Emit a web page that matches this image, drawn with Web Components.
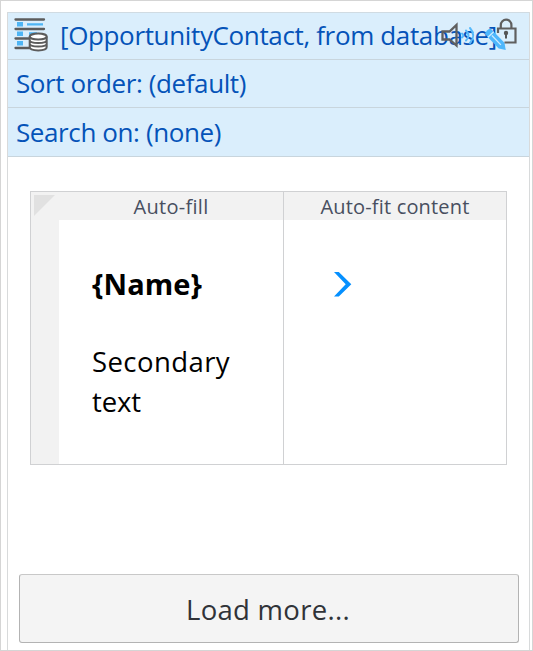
<!DOCTYPE html>
<html lang="en"><head><meta charset="utf-8"><title>List widget</title>
<style>
html,body{margin:0;height:100%;background:#fff}
body{font-family:"Open Sans","Noto Sans",sans-serif;overflow:hidden}
</style></head><body>
<page-frame>
  <source-header>
    <source-row icons><fit-text width="435">[OpportunityContact, from database]</fit-text></source-row>
    <source-row><fit-text width="228">Sort order: (default)</fit-text></source-row>
    <source-row><fit-text width="203">Search on: (none)</fit-text></source-row>
  </source-header>
  <layout-grid>
    <fit-text slot="h1" width="73">Auto-fill</fit-text>
    <fit-text slot="h2" width="147">Auto-fit content</fit-text>
    <fit-text slot="title" width="108">{Name}</fit-text>
    <fit-text slot="sub" width="136">Secondary</fit-text>
    <fit-text slot="sub" width="47">text</fit-text>
    <chevron-icon slot="action"></chevron-icon>
  </layout-grid>
  <load-button><fit-text width="162">Load more...</fit-text></load-button>
</page-frame>
<script>
const define=(name,html,after)=>customElements.define(name,class extends HTMLElement{
  connectedCallback(){
    if(this.shadowRoot)return;
    this.attachShadow({mode:'open'}).innerHTML=html;
    if(after)after(this);
  }
});
define('page-frame',`<style>
:host{display:block;box-sizing:border-box;width:533px;height:651px;border:1px solid #d5d5d5;padding:11px 2px 0 6px}
.panel{box-sizing:border-box;height:638px;border:1px solid #d8dadb;border-width:0 1px;width:523px;display:flex;flex-direction:column}
</style><div class="panel"><slot></slot></div>`);
define('source-header',`<style>:host{display:block;border-top:1px solid #d0dbe2;background:#daeefc}</style><slot></slot>`);
define('source-row',`<style>
:host{display:flex;position:relative;box-sizing:border-box;height:48px;padding-left:8px;border-bottom:1px solid #c8d5dd;color:#0553b8;font-size:26px;line-height:47px;background:#daeefc}
:host([icons]){height:47px;line-height:45px;padding-left:5px}
:host(:last-child){height:49px;line-height:48px}
.tools{position:absolute;right:9px;top:3px}
list-icon{margin-right:11px}
:host(:not([icons])) list-icon,:host(:not([icons])) .tools{display:none}
</style><list-icon></list-icon><slot></slot><tool-icons class="tools"></tool-icons>`);
define('list-icon',`<style>:host{display:block;flex:none;width:36px;height:46px}svg{display:block}</style>
<svg width="36" height="46" viewBox="13 13 36 46">
<g fill="#4eb5f5"><path d="M17 22h6v4.500h-6zM17 31.500h6v4.500h-6zM17 41h6v4.500h-6z"/><path d="M27 23.200h16v2.200H27zM29 32.300h8v2.500h-8z"/></g>
<g stroke="#5c5c5c" stroke-width="2.300" stroke-linecap="round"><path d="M15.500 19.500h28.500M15.500 29h28.500M15.500 38.500h14M15.500 48h14"/></g>
<path d="M29.700 36.300v10.500c0 5 17 5 17 0V36.300z" fill="#fff"/>
<ellipse cx="38.200" cy="36.300" rx="8.500" ry="3" fill="#fff"/>
<g fill="none" stroke="#5c5c5c" stroke-width="2"><ellipse cx="38.200" cy="36.600" rx="8.500" ry="3"/><path d="M29.700 36.600v10.500c0 4.500 17 4.500 17 0V36.600M29.700 40c0 4 17 4 17 0M29.700 43.600c0 4 17 4 17 0"/></g></svg>`);
define('tool-icons',`<style>:host{display:block;width:80px;height:36px}svg{display:block}</style>
<svg width="80" height="36" viewBox="440 16 80 36">
<g fill="none" stroke="#5f5f5f" stroke-width="2.300"><path d="M442.500 31.500h7l7-6.500v20.500l-7-6h-7z"/></g>
<g fill="none" stroke="#55b9fb" stroke-width="2" stroke-linecap="round"><path d="M462 33.500q2.500 2 0 4M466 30.500q5 5 0 10M470 28q6.500 7.500 0 15"/></g>
<g transform="translate(487 30.500) rotate(46)"><path d="M1-4h20l6 4-6 4H1q-2-4 0-8z" fill="#4eb7fc"/><path d="M5.500-4v8M7 0h13" stroke="#cdebff" stroke-width="1.300"/></g>
<path d="M498 33v-4.500h17.500v14H504.500" fill="none" stroke="#5f5f5f" stroke-width="2.200"/>
<path d="M500.800 28v-3a5.300 5.300 0 0 1 10.600 0v3" fill="none" stroke="#5f5f5f" stroke-width="2.200"/>
<circle cx="506" cy="33" r="2.200" fill="#555"/><path d="M506 33v5.500" stroke="#555" stroke-width="2"/></svg>`);
define('layout-grid',`<style>
:host{display:grid;box-sizing:border-box;width:477px;height:274px;margin:34px 0 0 22px;border:1px solid #d0d1d3;grid-template:28px 1fr / 28px 225px 1fr}
.corner{grid-row:1/3;background:#f2f2f2;padding:2px}
.corner svg{display:block}
.head{display:flex;justify-content:center;background:#f2f2f2;color:#484f60;font-size:20px;line-height:29px;height:28px}
.line{border-right:1px solid #d0d1d3}
.cell{padding-left:33px}
.title{font-weight:700;font-size:29px;line-height:40px;color:#000;margin-top:44px}
.sub{font-size:27.500px;line-height:40px;margin-top:38px;color:#000}
.action{padding:52px 0 0 49px}
</style><div class="corner"><svg width="23" height="23"><path d="M1 1h21L1 22z" fill="#e1e1e1"/></svg></div>
<div class="head line"><slot name="h1"></slot></div><div class="head"><slot name="h2"></slot></div>
<div class="cell line"><div class="title"><slot name="title"></slot></div><div class="sub"><slot name="sub"></slot></div></div>
<div class="action"><slot name="action"></slot></div>`);
define('chevron-icon',`<style>:host{display:block;width:19px;height:26px}svg{display:block}</style><svg width="19" height="26"><path d="M1 0h4.800L18.300 12.200 5.800 24.500H1L12.700 12.200z" fill="#0590ff"/></svg>`);
define('load-button',`<style>
:host{display:flex;justify-content:center;box-sizing:border-box;width:500px;height:69px;margin:109px 0 0 11px;padding-right:2px;border:1px solid #b3b3b3;border-top-color:#c8c8c8;border-radius:3px;background:#f4f4f4;color:#303338;font-size:27.500px;line-height:69px}
</style><slot></slot>`);
// Spreads the letters so that the run takes the width given in its attribute.
define('fit-text',`<style>:host{display:block;flex:none;width:max-content;white-space:pre}span{display:inline-block}</style><span></span>`,el=>{
  const s=el.shadowRoot.querySelector('span');
  s.textContent=el.textContent;
  const fit=()=>{
    s.style.letterSpacing='0px';
    const n=s.textContent.length,w=+el.getAttribute('width');
    s.style.letterSpacing=(w+2-s.getBoundingClientRect().width)/n+'px';
  };
  requestAnimationFrame(fit);fit();
});
</script></body></html>
